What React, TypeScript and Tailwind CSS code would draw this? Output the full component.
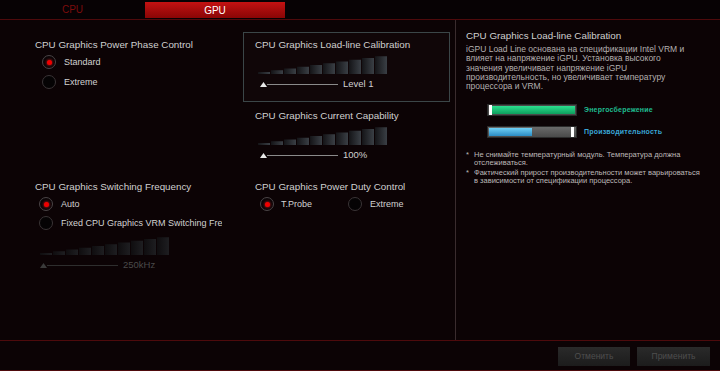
import React from "react";

const FONT = "font-['Liberation_Sans',Arial,sans-serif]";

function Bars({ dim = false, id }: { dim?: boolean; id: string }) {
  return (
    <svg width="130" height="18" viewBox="0 0 130 18">
      <defs>
        <linearGradient id={id} x1="0" x2="1" y1="0" y2="0">
          <stop offset="0" stopColor={dim ? "#0f0d0f" : "#141417"} />
          <stop offset="1" stopColor={dim ? "#1e1e21" : "#3a3f45"} />
        </linearGradient>
      </defs>
      {Array.from({ length: 10 }).map((_, i) => {
        const h = 2 + i * 1.75;
        return <rect key={i} x={i * 13} y={18 - h} width={12} height={h} fill={`url(#${id})`} />;
      })}
    </svg>
  );
}

function Slider({ label, dim = false, lineW = 71 }: { label: string; dim?: boolean; lineW?: number }) {
  return (
    <div className="flex items-center h-[10px]">
      <svg width="7" height="5" viewBox="0 0 7 5">
        <polygon points="3.5,0 7,5 0,5" fill={dim ? "#3a3a3a" : "#e8e8e8"} />
      </svg>
      <div className={`h-px ${dim ? "bg-[#2e2e2e]" : "bg-[#8a8a8a]"}`} style={{ width: lineW }} />
      <span className={`ml-[5px] text-[9.5px] leading-[10px] ${dim ? "text-[#4a4a4a]" : "text-[#d0d0d0]"}`}>{label}</span>
    </div>
  );
}

function Radio({ checked, label, gap = 8 }: { checked: boolean; label: string; gap?: number }) {
  return (
    <div className="flex items-center h-[14px]">
      <div
        className={`w-[14px] h-[14px] rounded-full border flex items-center justify-center shrink-0 ${
          checked ? "border-[#4a4446] bg-[#0a0507]" : "border-[#3a3436] bg-[#050304]"
        }`}
      >
        {checked && <div className="w-[5px] h-[5px] rounded-full bg-[#f00000] shadow-[0_0_3px_#ff2020]" />}
      </div>
      <span className="text-[9px] leading-[14px] text-[#d2d2d2] whitespace-nowrap" style={{ marginLeft: gap }}>
        {label}
      </span>
    </div>
  );
}

function Title({ children }: { children: React.ReactNode }) {
  return <div className="text-[9.8px] leading-[12px] text-[#d0d0d0] whitespace-nowrap">{children}</div>;
}

export default function App() {
  return (
    <div className={`${FONT} w-[720px] h-[371px] bg-[#0c0305] flex flex-col overflow-hidden`}>
      {/* Tabs */}
      <div className="h-[20px] bg-[#070204] border-b border-[#4e0a0c] flex items-start">
        <div className="w-[145px] h-[19px] flex items-center justify-center text-[10px] text-[#7c0c0c]">CPU</div>
        <div className="mt-[2px] w-[140px] h-[16px] bg-gradient-to-b from-[#c41212] to-[#8a0606] flex items-center justify-center text-[10px] text-white">
          GPU
        </div>
      </div>

      {/* Main */}
      <div className="h-[320px] flex">
        <div className="w-[455px] flex pl-[35px]">
          {/* Column 1 */}
          <div className="w-[208px] flex flex-col">
            <div className="mt-[19px]">
              <Title>CPU Graphics Power Phase Control</Title>
            </div>
            <div className="mt-[4px] ml-[7px]">
              <Radio checked label="Standard" />
            </div>
            <div className="mt-[6px] ml-[7px]">
              <Radio checked={false} label="Extreme" />
            </div>
            <div className="mt-[92px]">
              <Title>CPU Graphics Switching Frequency</Title>
            </div>
            <div className="mt-[4px] ml-[4px]">
              <Radio checked label="Auto" />
            </div>
            <div className="mt-[5px] ml-[4px] w-[183px] overflow-hidden">
              <Radio checked={false} label="Fixed CPU Graphics VRM Switching Frequency" />
            </div>
            <div className="mt-[7px] ml-[5px]">
              <Bars dim id="b3" />
            </div>
            <div className="mt-[5px] ml-[5px]">
              <Slider label="250kHz" dim lineW={71} />
            </div>
          </div>

          {/* Column 2 */}
          <div className="w-[207px] flex flex-col">
            <div className="mt-[12px] h-[70px] border border-[#3b4648] bg-[#100608] pl-[11px] flex flex-col">
              <div className="mt-[6px]">
                <Title>CPU Graphics Load-line Calibration</Title>
              </div>
              <div className="mt-[5px] ml-[3px]">
                <Bars id="b1" />
              </div>
              <div className="mt-[5px] ml-[5px]">
                <Slider label="Level 1" />
              </div>
            </div>
            <div className="pl-[12px] flex flex-col">
              <div className="mt-[8px]">
                <Title>CPU Graphics Current Capability</Title>
              </div>
              <div className="mt-[5px] ml-[3px]">
                <Bars id="b2" />
              </div>
              <div className="mt-[5px] ml-[5px]">
                <Slider label="100%" />
              </div>
              <div className="mt-[21px]">
                <Title>CPU Graphics Power Duty Control</Title>
              </div>
              <div className="mt-[4px] ml-[5px] flex">
                <div className="w-[88px]">
                  <Radio checked label="T.Probe" gap={7} />
                </div>
                <Radio checked={false} label="Extreme" gap={8} />
              </div>
            </div>
          </div>
        </div>

        {/* Divider */}
        <div className="w-px bg-[#3a2c2e]" />

        {/* Right panel */}
        <div className="flex-1 pl-[10px] pt-[10px] flex flex-col">
          <Title>CPU Graphics Load-line Calibration</Title>
          <div className="mt-[3px] text-[8.5px] leading-[9.3px] text-[#b4b0b0] whitespace-nowrap">
            <div>iGPU Load Line основана на спецификации Intel VRM и</div>
            <div>влияет на напряжение iGPU. Установка высокого</div>
            <div>значения увеличивает напряжение iGPU</div>
            <div>производительность, но увеличивает температуру</div>
            <div>процессора и VRM.</div>
          </div>

          <div className="mt-[13px] ml-[21px] flex items-center h-[12px]">
            <div className="w-[90px] h-[12px] bg-[#4a4a4a] border border-[#2a2a2a] flex items-center px-[1px]">
              <div className="w-[3px] h-[10px] bg-white" />
              <div className="flex-1 h-[8px] bg-gradient-to-b from-[#2be08f] to-[#0d9d5c]" />
            </div>
            <span className="ml-[7px] text-[7px] font-bold text-[#1fbd90] tracking-[0.2px]">Энергосбережение</span>
          </div>
          <div className="mt-[10px] ml-[21px] flex items-center h-[12px]">
            <div className="w-[90px] h-[12px] bg-gradient-to-b from-[#6a6a6a] to-[#4a4a4a] border border-[#2a2a2a] flex items-center px-[1px]">
              <div className="w-[43px] h-[8px] bg-gradient-to-b from-[#6fd0f5] to-[#2a8cc4]" />
              <div className="flex-1" />
              <div className="w-[3px] h-[10px] bg-white mr-[1px]" />
            </div>
            <span className="ml-[7px] text-[7px] font-bold text-[#3aa6d6] tracking-[0.2px]">Производительность</span>
          </div>

          <div className="mt-[13px] text-[7.5px] leading-[8px] text-[#bdb8b8] flex flex-col gap-[2px]">
            <div className="flex">
              <span className="w-[8px] shrink-0">*</span>
              <div>
                <div>Не снимайте температурный модуль. Температура должна</div>
                <div>отслеживаться.</div>
              </div>
            </div>
            <div className="flex">
              <span className="w-[8px] shrink-0">*</span>
              <div>
                <div>Фактический прирост производительности может варьироваться</div>
                <div>в зависимости от спецификации процессора.</div>
              </div>
            </div>
          </div>
        </div>
      </div>

      {/* Bottom bar */}
      <div className="flex-1 border-t border-[#4e0a0c] border-b flex items-start justify-end pr-[10px] pt-[6px] gap-[7px]">
        <div className="w-[72px] h-[19px] bg-gradient-to-b from-[#2a2a2a] to-[#1c1c1c] flex items-center justify-center text-[8.5px] text-[#4e4e4e]">
          Отменить
        </div>
        <div className="w-[73px] h-[19px] bg-gradient-to-b from-[#2a2a2a] to-[#1c1c1c] flex items-center justify-center text-[8.5px] text-[#4e4e4e]">
          Применить
        </div>
      </div>
    </div>
  );
}
